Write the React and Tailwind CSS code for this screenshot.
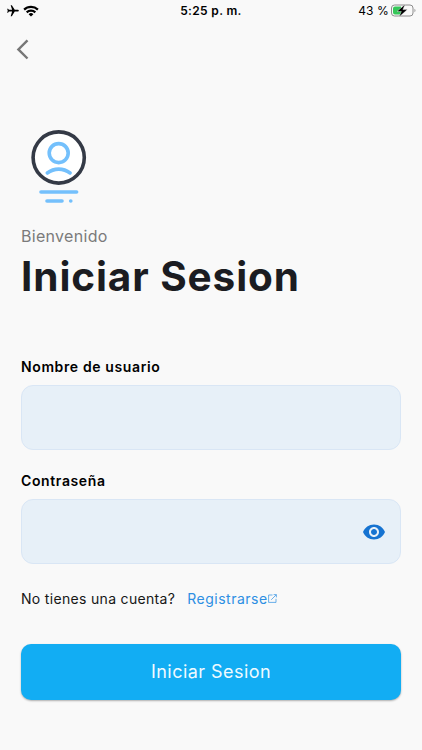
import React, { useState } from 'react'
import { MdFlight, MdRemoveRedEye } from 'react-icons/md'

function StatusBar() {
  return (
    <div className="grid grid-cols-3 items-center h-[22px] px-[6px] text-black">
      <div className="flex items-center gap-[3px]">
        <MdFlight className="rotate-90 w-[14px] h-[14px]" />
        <svg className="w-4 h-3 -mt-px" viewBox="0 0 16 12" fill="none" stroke="currentColor" strokeWidth="2.2">
          <path d="M1.1 4.6a9.9 9.9 0 0 1 13.8 0" />
          <path d="M3.7 7.4a6.1 6.1 0 0 1 8.6 0" />
          <path d="M8 11.6 5.6 9.2a3.5 3.5 0 0 1 4.8 0z" fill="currentColor" stroke="none" />
        </svg>
      </div>
      <span className="text-center whitespace-nowrap text-[12px] leading-4 font-semibold tracking-[0.35px]">5:25 p. m.</span>
      <div className="flex items-center justify-end gap-[2px]">
        <span className="text-[12px] leading-4 tracking-[0.1px]">43 %</span>
        <svg className="w-[25px] h-[13px] -mt-px" viewBox="0 0 25 13">
          <rect x="0.5" y="1" width="21.5" height="11" rx="3" fill="none" stroke="#8c8c8c" />
          <path d="M4 2.5h6v8H4a2 2 0 0 1-2-2v-4a2 2 0 0 1 2-2z" fill="#35c759" />
          <path d="M23.5 4.8v3.4c1.3-.5 1.3-2.9 0-3.4z" fill="#8c8c8c" />
          <path d="M14.2 0.2 6 7.5h4.3L8 13l8.4-7.4h-4.5z" fill="#000" stroke="#f9f9f9" strokeWidth="0.4" />
        </svg>
      </div>
    </div>
  )
}

function Logo() {
  return (
    <svg className="w-[58px] h-[76px] ml-[9px]" viewBox="0 0 58 76" fill="none" stroke="#74c0fc" strokeWidth="3.6" strokeLinecap="round">
      <circle cx="28.7" cy="28.5" r="25.6" fill="#fff" stroke="#343a46" />
      <circle cx="28.7" cy="24.1" r="9.5" />
      <path d="M17.3 44c6.8-5.2 16-5.2 22.8 0" />
      <path d="M11 63h35.6" />
      <path d="M17 72h15" />
      <path d="M40.7 72h.1" />
    </svg>
  )
}

function Field({ label, children, ...props }) {
  return (
    <label className="block">
      <span className="block text-[14px] leading-5 font-semibold tracking-[0.62px] text-black">{label}</span>
      <span className="flex items-center h-[65px] mt-[8px] pr-[14px] rounded-[12px] border border-[#d9e6f5] bg-[#e7f0f8]">
        <input className="flex-1 min-w-0 h-full px-4 bg-transparent outline-none" {...props} />
        {children}
      </span>
    </label>
  )
}

export default function App() {
  const [visible, setVisible] = useState(false)

  return (
    <div className="min-h-screen bg-[#f9f9f9] font-['Inter',sans-serif]">
      <StatusBar />

      <div className="px-[21px]">
        {/* Back */}
        <button type="button" className="block mt-[17px] -ml-[5px]">
          <svg className="w-[14px] h-[21px]" viewBox="0 0 14 21" fill="none" stroke="#777" strokeWidth="2.4">
            <path d="M11.5 1.3 2.4 10.4l9.1 9.1" />
          </svg>
        </button>

        <div className="mt-[69px]">
          <Logo />
        </div>

        <p className="mt-[19px] text-[16px] leading-6 tracking-[0.3px] text-[#7b7b7b]">Bienvenido</p>
        <h1 className="mt-[4px] text-[40.5px] leading-[50px] font-bold tracking-[0.9px] text-[#1b1c21]">Iniciar Sesion</h1>

        <form className="mt-[55px]" onSubmit={(e) => e.preventDefault()}>
          <Field label="Nombre de usuario" type="text" />
          <div className="mt-[21px]">
            <Field label="Contraseña" type={visible ? 'text' : 'password'}>
              <button type="button" onClick={() => setVisible(!visible)}>
                <MdRemoveRedEye className="w-6 h-6 text-[#1673d1]" />
              </button>
            </Field>
          </div>

          <div className="flex items-center mt-[25px] h-5 text-[14px] leading-5 tracking-[0.32px]">
            <span className="text-[#161616]">No tienes una cuenta?</span>
            <a href="#registro" className="flex items-center ml-3 tracking-[0.5px] text-[#2d8fe3]">
              Registrarse
              <svg className="w-[9px] h-[9px] -mt-px" viewBox="0 0 9 9" fill="none" stroke="currentColor" strokeWidth="0.7">
                <path d="M4.5 1H.6v7.4H8V4.8M5.6.6h2.8v2.8M8.2.8 3.2 5.8" />
              </svg>
            </a>
          </div>

          <button type="submit" className="block w-full h-14 mt-[35px] pb-px rounded-[10px] bg-[#12adf3] text-[18px] font-normal tracking-[0.45px] text-[#effaff] shadow-[0_1px_2px_rgba(0,0,0,0.3)]">
            Iniciar Sesion
          </button>
        </form>
      </div>
    </div>
  )
}
